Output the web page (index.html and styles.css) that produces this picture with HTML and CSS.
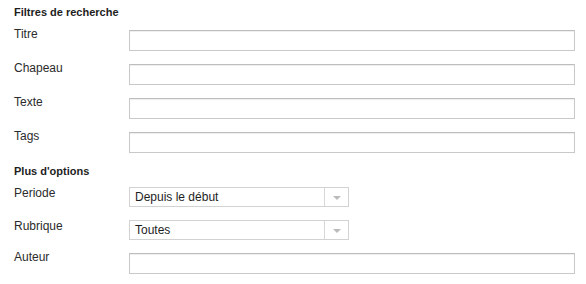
FILE: index.html
```html
<!DOCTYPE html>
<html lang="fr">

<head>
    <meta charset="UTF-8">
    <meta name="viewport" content="width=device-width, initial-scale=1.0">
    <title>Recherche</title>
    <link rel="stylesheet" href="styles.css">
</head>

<body>
    <form class="search-form">
        <h3 class="form-title">Filtres de recherche</h3>
        <div class="row">
            <label class="row-label" for="titre">Titre</label>
            <input class="field" type="text" id="titre">
        </div>
        <div class="row">
            <label class="row-label" for="chapeau">Chapeau</label>
            <input class="field" type="text" id="chapeau">
        </div>
        <div class="row">
            <label class="row-label" for="texte">Texte</label>
            <input class="field" type="text" id="texte">
        </div>
        <div class="row">
            <label class="row-label" for="tags">Tags</label>
            <input class="field" type="text" id="tags">
        </div>

        <h3 class="form-title form-title-sub">Plus d'options</h3>
        <div class="row row-select">
            <label class="row-label" for="periode">Periode</label>
            <div class="select-box">
                <span class="select-value" id="periode">Depuis le début</span>
                <span class="select-arrow"></span>
            </div>
        </div>
        <div class="row row-select">
            <label class="row-label" for="rubrique">Rubrique</label>
            <div class="select-box">
                <span class="select-value" id="rubrique">Toutes</span>
                <span class="select-arrow"></span>
            </div>
        </div>
        <div class="row">
            <label class="row-label" for="auteur">Auteur</label>
            <input class="field" type="text" id="auteur">
        </div>
    </form>
</body>

</html>
```

FILE: styles.css
```css
body {
    margin: 0;
    background: #fff;
    font-family: "Liberation Sans", Arial, sans-serif;
    color: #2b2b2b;
}

/* column flex so the row margins add up instead of collapsing */
.search-form {
    display: flex;
    flex-direction: column;
    padding: 5px 11px 0 14px;
}

.form-title {
    margin: 0 0 8px;
    font-size: 11px;
    line-height: 14px;
    font-weight: bold;
    color: #1e1e1e;
}

.form-title-sub {
    margin-top: 1px;
}

.row {
    display: flex;
    align-items: flex-start;
    margin-bottom: 10px;
}

.row-label {
    width: 115px;
    flex-shrink: 0;
    font-size: 12px;
    line-height: 14px;
}

.field {
    flex: 1;
    box-sizing: border-box;
    height: 21px;
    margin: 3px 0 0;
    padding: 0 5px;
    border: 1px solid #c9c9c9;
    border-top-color: #bdbdbd;
    box-shadow: inset 0 1px 1px #eee;
    font-family: inherit;
    font-size: 12px;
    outline: none;
}

.row-select + .row-select {
    margin-top: 2px;
}

.select-box {
    display: flex;
    box-sizing: border-box;
    width: 220px;
    height: 20px;
    margin-top: 1px;
    border: 1px solid #d2d2d2;
    background: #fff;
}

.select-value {
    flex: 1;
    padding-left: 5px;
    font-size: 12px;
    line-height: 19px;
    color: #1e1e1e;
}

.select-arrow {
    position: relative;
    width: 23px;
    border-left: 1px solid #d8d8d8;
}

.select-arrow::after {
    content: "";
    position: absolute;
    left: 8px;
    top: 8px;
    border-left: 4px solid transparent;
    border-right: 4px solid transparent;
    border-top: 4px solid #bbb;
}
```
